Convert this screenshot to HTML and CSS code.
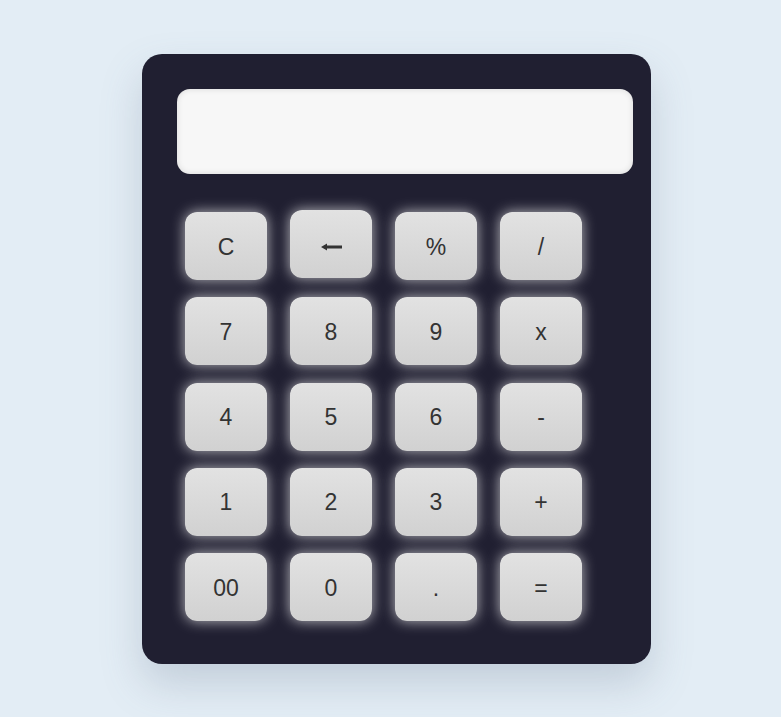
FILE: index.html
```html
<!DOCTYPE html>
<html>
<head>
<meta charset="utf-8">
<link rel="stylesheet" href="styles.css">
</head>
<body>
<div class="page">
  <div class="calc">
    <div class="display"></div>
    <div class="keys">
      <button class="key">C</button>
      <button class="key raised" aria-label="backspace"><svg class="arrow" width="21" height="8" viewBox="0 0 21 8"><path d="M0 4 L6 0.5 L6 2.4 L21 2.4 L21 5.6 L6 5.6 L6 7.5 Z" fill="#333"/></svg></button>
      <button class="key">%</button>
      <button class="key">/</button>
      <button class="key">7</button>
      <button class="key">8</button>
      <button class="key">9</button>
      <button class="key">x</button>
      <button class="key">4</button>
      <button class="key">5</button>
      <button class="key">6</button>
      <button class="key">-</button>
      <button class="key">1</button>
      <button class="key">2</button>
      <button class="key">3</button>
      <button class="key">+</button>
      <button class="key">00</button>
      <button class="key">0</button>
      <button class="key">.</button>
      <button class="key">=</button>
    </div>
  </div>
</div>
</body>
</html>
```
FILE: styles.css
```css
html, body {
  margin: 0;
  padding: 0;
  background: #e3edf5;
  font-family: "Liberation Sans", Arial, sans-serif;
}
.page {
  width: 781px;
  height: 717px;
  padding: 54px 0 0 142px;
  box-sizing: border-box;
}
.calc {
  width: 509px;
  height: 610px;
  box-sizing: border-box;
  background: #201f31;
  border-radius: 20px;
  padding: 35px 18px 0 35px;
  box-shadow: 0 20px 40px rgba(100, 115, 140, 0.25);
}
.display {
  width: 456px;
  height: 85px;
  background: #f7f7f7;
  border-radius: 13px;
  box-shadow: inset 0 0 6px rgba(0, 0, 0, 0.12);
}
.keys {
  display: grid;
  grid-template-columns: repeat(4, 82px);
  grid-auto-rows: 68px;
  column-gap: 23px;
  row-gap: 17.25px;
  margin: 38px 0 0 8px;
}
.key {
  display: flex;
  align-items: center;
  justify-content: center;
  border: none;
  margin: 0;
  padding: 2px 0 0;
  border-radius: 12px;
  background: linear-gradient(to bottom, #e2e2e2, #d1d1d1);
  box-shadow: 0 0 14px rgba(255, 255, 255, 0.7);
  color: #333;
  font-family: "Liberation Sans", Arial, sans-serif;
  font-size: 23px;
  line-height: 1;
}
.raised {
  transform: translateY(-2px);
  padding-top: 5px;
}
.arrow {
  display: block;
}
```
